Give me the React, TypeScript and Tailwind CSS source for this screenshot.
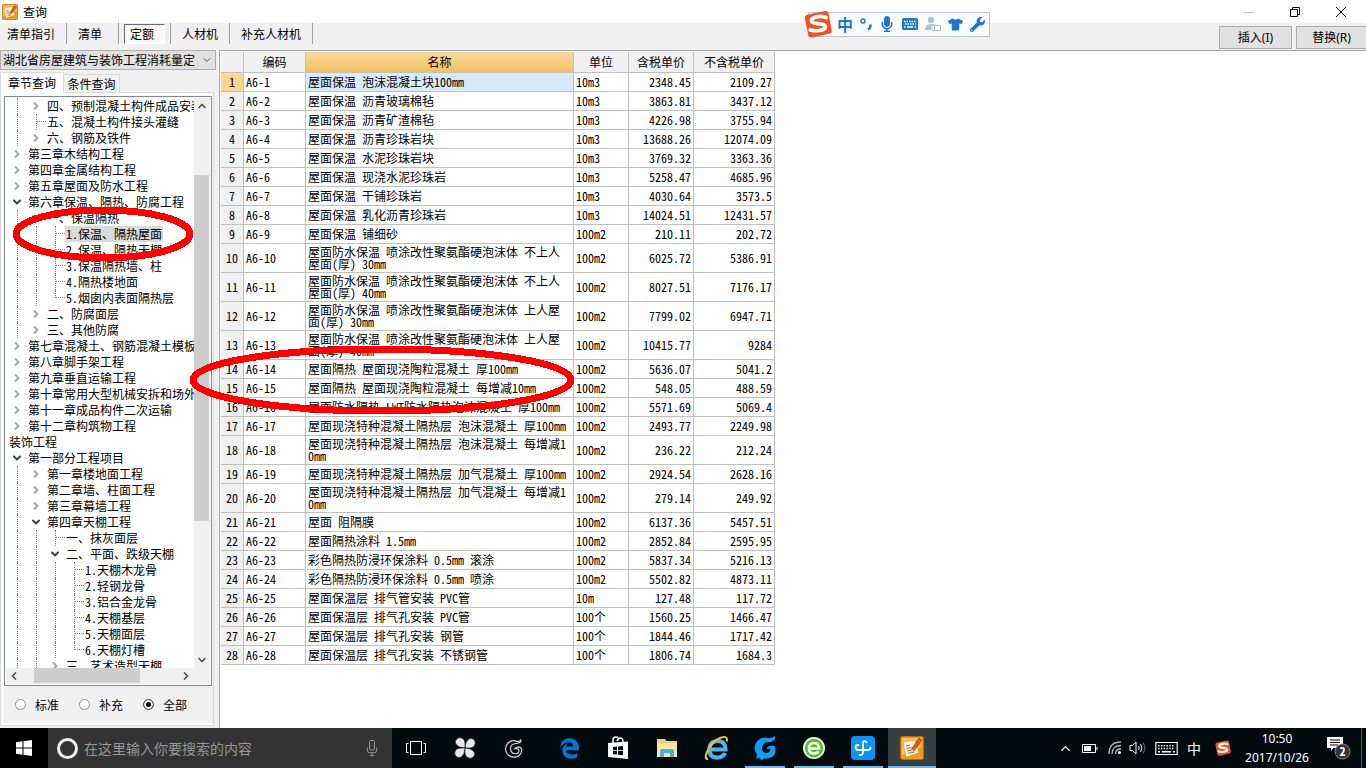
import { ReactNode } from "react";
import clsx from "clsx";
import { ChevronDown, ChevronLeft, ChevronRight, ChevronUp } from "lucide-react";
import { FaEdgeLegacy, FaMicrophone, FaTshirt, FaWrench } from "react-icons/fa";

type TreeNode = {
  // one mark per level: | line, t leaf, L last leaf, > closed, v open
  guide: string;
  text: string;
  selected?: boolean;
};

const tree: TreeNode[] = [
  { guide: "|>", text: "四、预制混凝土构件成品安装" },
  { guide: "|t", text: "五、混凝土构件接头灌缝" },
  { guide: "|>", text: "六、钢筋及铁件" },
  { guide: ">", text: "第三章木结构工程" },
  { guide: ">", text: "第四章金属结构工程" },
  { guide: ">", text: "第五章屋面及防水工程" },
  { guide: "v", text: "第六章保温、隔热、防腐工程" },
  { guide: "|v", text: "一、保温隔热" },
  { guide: "||t", text: "1.保温、隔热屋面", selected: true },
  { guide: "||t", text: "2.保温、隔热天棚" },
  { guide: "||t", text: "3.保温隔热墙、柱" },
  { guide: "||t", text: "4.隔热楼地面" },
  { guide: "||L", text: "5.烟囱内表面隔热层" },
  { guide: "|>", text: "二、防腐面层" },
  { guide: "|>", text: "三、其他防腐" },
  { guide: ">", text: "第七章混凝土、钢筋混凝土模板" },
  { guide: ">", text: "第八章脚手架工程" },
  { guide: ">", text: "第九章垂直运输工程" },
  { guide: ">", text: "第十章常用大型机械安拆和场外" },
  { guide: ">", text: "第十一章成品构件二次运输" },
  { guide: ">", text: "第十二章构筑物工程" },
  { guide: "", text: "装饰工程" },
  { guide: "v", text: "第一部分工程项目" },
  { guide: "|>", text: "第一章楼地面工程" },
  { guide: "|>", text: "第二章墙、柱面工程" },
  { guide: "|>", text: "第三章幕墙工程" },
  { guide: "|v", text: "第四章天棚工程" },
  { guide: "||t", text: "一、抹灰面层" },
  { guide: "||v", text: "二、平面、跌级天棚" },
  { guide: "|||t", text: "1.天棚木龙骨" },
  { guide: "|||t", text: "2.轻钢龙骨" },
  { guide: "|||t", text: "3.铝合金龙骨" },
  { guide: "|||t", text: "4.天棚基层" },
  { guide: "|||t", text: "5.天棚面层" },
  { guide: "|||L", text: "6.天棚灯槽" },
  { guide: "||>", text: "三、艺术造型天棚" },
];

const rows: [string, string, string, string][] = [
  ["屋面保温 泡沫混凝土块100mm", "10m3", "2348.45", "2109.27"],
  ["屋面保温 沥青玻璃棉毡", "10m3", "3863.81", "3437.12"],
  ["屋面保温 沥青矿渣棉毡", "10m3", "4226.98", "3755.94"],
  ["屋面保温 沥青珍珠岩块", "10m3", "13688.26", "12074.09"],
  ["屋面保温 水泥珍珠岩块", "10m3", "3769.32", "3363.36"],
  ["屋面保温 现浇水泥珍珠岩", "10m3", "5258.47", "4685.96"],
  ["屋面保温 干铺珍珠岩", "10m3", "4030.64", "3573.5"],
  ["屋面保温 乳化沥青珍珠岩", "10m3", "14024.51", "12431.57"],
  ["屋面保温 铺细砂", "100m2", "210.11", "202.72"],
  ["屋面防水保温 喷涂改性聚氨酯硬泡沫体 不上人\n屋面(厚) 30mm", "100m2", "6025.72", "5386.91"],
  ["屋面防水保温 喷涂改性聚氨酯硬泡沫体 不上人\n屋面(厚) 40mm", "100m2", "8027.51", "7176.17"],
  ["屋面防水保温 喷涂改性聚氨酯硬泡沫体 上人屋\n面(厚) 30mm", "100m2", "7799.02", "6947.71"],
  ["屋面防水保温 喷涂改性聚氨酯硬泡沫体 上人屋\n面(厚) 40mm", "100m2", "10415.77", "9284"],
  ["屋面隔热 屋面现浇陶粒混凝土 厚100mm", "100m2", "5636.07", "5041.2"],
  ["屋面隔热 屋面现浇陶粒混凝土 每增减10mm", "100m2", "548.05", "488.59"],
  ["屋面防水隔热 LWT防水隔热泡沫混凝土 厚100mm", "100m2", "5571.69", "5069.4"],
  ["屋面现浇特种混凝土隔热层 泡沫混凝土 厚100mm", "100m2", "2493.77", "2249.98"],
  ["屋面现浇特种混凝土隔热层 泡沫混凝土 每增减1\n0mm", "100m2", "236.22", "212.24"],
  ["屋面现浇特种混凝土隔热层 加气混凝土 厚100mm", "100m2", "2924.54", "2628.16"],
  ["屋面现浇特种混凝土隔热层 加气混凝土 每增减1\n0mm", "100m2", "279.14", "249.92"],
  ["屋面 阻隔膜", "100m2", "6137.36", "5457.51"],
  ["屋面隔热涂料 1.5mm", "100m2", "2852.84", "2595.95"],
  ["彩色隔热防浸环保涂料 0.5mm 滚涂", "100m2", "5837.34", "5216.13"],
  ["彩色隔热防浸环保涂料 0.5mm 喷涂", "100m2", "5502.82", "4873.11"],
  ["屋面保温层 排气管安装 PVC管", "10m", "127.48", "117.72"],
  ["屋面保温层 排气孔安装 PVC管", "100个", "1560.25", "1466.47"],
  ["屋面保温层 排气孔安装 钢管", "100个", "1844.46", "1717.42"],
  ["屋面保温层 排气孔安装 不锈钢管", "100个", "1806.74", "1684.3"],
];

const NotebookIcon = ({ className }: { className?: string }) => (
  <svg viewBox="0 0 24 24" className={className}>
    <rect x="0.5" y="0.5" width="23" height="23" rx="2" fill="#f39a12" stroke="#b86a08" />
    <path d="M2 2h20v9L2 19z" fill="#ffc04d" />
    <path d="M3 6l12-2 4 13-13 4z" fill="#fff8e8" stroke="#c88a3a" strokeWidth=".6" />
    <path d="M6 10l4-1M6.500 12.500l5-1M7 15l5-1M8 17.500l6-1.500" stroke="#8a6a4a" strokeWidth="1" />
    <path d="M19 2l3 2-8 11-3 2 .5-4z" fill="#e35b1a" stroke="#8f3405" strokeWidth=".6" />
    <path d="M11 17l.5-4 2.500 2z" fill="#fbe2b0" />
  </svg>
);

const SogouIcon = ({ className }: { className?: string }) => (
  <svg viewBox="0 0 28 28" className={className}>
    <path
      d="M4 4.500L21 1q3-.5 3.600 2.300l3 17q.4 2.700-2.300 3.500L8 27.500q-3 .5-3.600-2.300L.8 8.500Q.4 5.300 4 4.500z"
      fill="#f4511e"
    />
    <path
      d="M22 7.500C17 5.500 7 6.500 7.500 11c.4 4 13.500 1.500 13.800 5.500.2 4-10 5.500-15 3.500"
      fill="none"
      stroke="#fff"
      strokeWidth="3.800"
      strokeLinecap="round"
    />
  </svg>
);

const KeyboardIcon = ({ className }: { className?: string }) => (
  <svg viewBox="0 0 24 14" className={className} fill="none" stroke="currentColor">
    <rect x="0.5" y="0.5" width="23" height="13" strokeWidth="1.200" />
    <path d="M3 4h18M3 7h18" strokeWidth="1.500" strokeDasharray="1.500 1.500" />
    <path d="M3 10.500h2M7 10.500h10M19 10.500h2" strokeWidth="1.500" />
  </svg>
);

const GuideCell = ({ mark }: { mark: string }) => {
  if (mark === ">" || mark === "v") {
    return (
      <span className="flex h-4 w-[19px] shrink-0 items-center pl-[3px]">
        {mark === ">" ? (
          <ChevronRight className="size-3 text-[#a6a6a6]" strokeWidth={4} />
        ) : (
          <ChevronDown className="size-3 text-[#404040]" strokeWidth={4} />
        )}
      </span>
    );
  }
  return (
    <span className="flex h-4 w-[19px] shrink-0 pl-[9px]">
      <span
        className={clsx(
          "border-l border-dotted border-[#808080]",
          mark === "L" ? "h-2" : "h-4"
        )}
      />
      {mark !== "|" && (
        <span className="h-2 flex-1 border-b border-dotted border-[#808080]" />
      )}
    </span>
  );
};

const ScrollButton = ({ label, children }: { label: string; children: ReactNode }) => (
  <button
    type="button"
    aria-label={label}
    className="flex size-4 shrink-0 items-center justify-center text-[#505050]"
  >
    {children}
  </button>
);

const TitleBar = () => (
  <header className="flex h-[23px] shrink-0 items-center bg-white">
    <NotebookIcon className="ml-0.5 size-4" />
    <h1 className="ml-[5px] flex-1 text-[12px]">查询</h1>
    <div className="flex pr-0.5">
      <button type="button" aria-label="最小化" className="flex h-5 w-[46px] items-center justify-center">
        <svg viewBox="0 0 10 10" className="size-[10px]" stroke="#c4c4c4">
          <path d="M0 5.500h10" />
        </svg>
      </button>
      <button type="button" aria-label="还原" className="flex h-5 w-[46px] items-center justify-center">
        <svg viewBox="0 0 10 10" className="size-[10px]" fill="none" stroke="#000">
          <path d="M.5 2.500h7v7h-7zM2.500 2.500v-2h7v7h-2" />
        </svg>
      </button>
      <button type="button" aria-label="关闭" className="flex h-5 w-[46px] items-center justify-center">
        <svg viewBox="0 0 10 10" className="size-[10px]" stroke="#000">
          <path d="M0 0l10 10M10 0L0 10" />
        </svg>
      </button>
    </div>
  </header>
);

const ToolButton = ({ text, active }: { text: string; active?: boolean }) => (
  <div className="flex h-[21px] items-center border-r border-[#a0a0a0] px-[5px]">
    <button
      type="button"
      className={clsx(
        "h-5 min-w-[41px] border px-[5px] text-left leading-[18px]",
        active
          ? "border-t-[#696969] border-r-white border-b-white border-l-[#696969] bg-[#f8f8f8]"
          : "border-transparent"
      )}
    >
      {text}
    </button>
  </div>
);

const Toolbar = () => (
  <div className="flex h-[27px] shrink-0 justify-between">
    <div className="-ml-1 flex items-start">
      <ToolButton text="清单指引" />
      <ToolButton text="清单" />
      <ToolButton text="定额" active />
      <ToolButton text="人材机" />
      <ToolButton text="补充人材机" />
    </div>
    <div className='flex items-center gap-1 pt-0.5 font-["Noto_Sans","Noto_Sans_CJK_SC",sans-serif]'>
      <button type="button" className="h-[23px] w-[73px] border border-[#adadad] bg-[#e1e1e1]">
        插入(I)
      </button>
      <button type="button" className="h-[23px] w-[70px] border border-r-0 border-[#adadad] bg-[#e1e1e1]">
        替换(R)
      </button>
    </div>
  </div>
);

const Sidebar = () => (
  <aside className="flex w-[219px] shrink-0 flex-col">
    <div className="relative mr-[3px] h-5 shrink-0 text-[12px]">
      <select
        aria-label="定额库"
        className="h-full w-full appearance-none border border-[#adadad] bg-[#e1e1e1] pl-[2px]"
      >
        <option>湖北省房屋建筑与装饰工程消耗量定</option>
      </select>
      <ChevronDown className="pointer-events-none absolute top-1 right-[3px] size-3 text-[#505050]" />
    </div>
    <div role="tablist" className="z-10 -mb-px flex h-[23px] shrink-0 items-end pt-[2px]">
      <button
        type="button"
        role="tab"
        aria-selected="true"
        className="h-[21px] w-16 border border-b-0 border-[#d9d9d9] bg-white"
      >
        章节查询
      </button>
      <button
        type="button"
        role="tab"
        aria-selected="false"
        className="h-[19px] w-14 border-t border-r border-b border-[#d9d9d9]"
      >
        条件查询
      </button>
    </div>
    <div className="mr-[5px] mb-[2px] flex min-h-0 flex-1 flex-col border border-[#d9d9d9] bg-white p-[3px] pr-0 pb-0.5">
      <div className="mr-px flex min-h-0 flex-1 flex-col border border-[#828790] p-px">
        <div className="flex min-h-0 flex-1">
          <ul role="tree" className="min-w-0 flex-1 overflow-hidden pl-[2px]">
            {tree.map((node) => (
              <li
                key={node.guide + node.text}
                role="treeitem"
                aria-selected={!!node.selected}
                className="flex h-4 whitespace-nowrap"
              >
                {node.guide.split("").map((mark, i) => (
                  <GuideCell key={i} mark={mark} />
                ))}
                <span
                  className={clsx(
                    "h-4 px-px leading-4",
                    node.selected && "bg-[#d9d9d9]"
                  )}
                >
                  {node.text}
                </span>
              </li>
            ))}
          </ul>
          <div className="flex w-4 shrink-0 flex-col bg-[#f0f0f0]">
            <ScrollButton label="向上滚动">
              <ChevronUp className="size-3" strokeWidth={3.5} />
            </ScrollButton>
            <div className="flex min-h-0 flex-1 flex-col">
              <div className="grow-[61]" />
              <div className="mr-px grow-[347] bg-[#cdcdcd]" />
              <div className="grow-[131]" />
            </div>
            <ScrollButton label="向下滚动">
              <ChevronDown className="size-3" strokeWidth={3.5} />
            </ScrollButton>
          </div>
        </div>
        <div className="flex h-4 shrink-0 bg-[#f0f0f0] pr-4">
          <ScrollButton label="向左滚动">
            <ChevronLeft className="size-3" strokeWidth={3.5} />
          </ScrollButton>
          <div className="flex flex-1">
            <div className="grow-[12]" />
            <div className="mb-px grow-[105] bg-[#cdcdcd]" />
            <div className="grow-[38]" />
          </div>
          <ScrollButton label="向右滚动">
            <ChevronRight className="size-3" strokeWidth={3.5} />
          </ScrollButton>
        </div>
      </div>
      <fieldset className="shrink-0 bg-[#f0f0f0]">
        <div className="flex h-[37px] items-center gap-[5px] pl-[11px]">
          {["标准", "补充", "全部"].map((text) => (
            <label key={text} className="flex w-[59px] items-center gap-[9px]">
              <input
                type="radio"
                name="source"
                defaultChecked={text === "全部"}
                className="size-[11px] appearance-none rounded-full border border-[#8c8c8c] bg-white checked:border-[#555] checked:bg-black checked:ring-2 checked:ring-white checked:ring-inset"
              />
              {text}
            </label>
          ))}
        </div>
      </fieldset>
    </div>
  </aside>
);

const Grid = () => (
  <main className="min-w-0 flex-1 overflow-hidden border-t border-l border-[#a5a5ad] bg-white pt-px pl-px">
    <table className="w-[554px] table-fixed border-separate border-spacing-0">
      <colgroup>
        <col className="w-[23px]" />
        <col className="w-[62px]" />
        <col className="w-[268px]" />
        <col className="w-[55px]" />
        <col className="w-[65px]" />
        <col className="w-[81px]" />
      </colgroup>
      <thead>
        <tr className="h-[21px] bg-[#f0f0f0] *:border-r *:border-b *:border-[#c0c0c0] *:p-0 *:leading-4 *:font-normal">
          <th />
          <th>编码</th>
          <th className="bg-linear-to-b from-[#f9d99f] to-[#f1c15f]">名称</th>
          <th>单位</th>
          <th>含税单价</th>
          <th>不含税单价</th>
        </tr>
      </thead>
      <tbody>
        {rows.map(([name, unit, taxed, untaxed], i) => (
          <tr
            key={i}
            className="h-[19px] *:border-r *:border-b *:border-[#c0c0c0] *:px-[2px] *:py-[2px] *:leading-[12px]"
          >
            <th
              scope="row"
              className={clsx("font-normal", i === 0 ? "bg-[#ffd58d]" : "bg-[#f0f0f0]")}
            >
              {i + 1}
            </th>
            <td>A6-{i + 1}</td>
            <td className={clsx("whitespace-pre", i === 0 && "bg-[#d8e9f8]")}>{name}</td>
            <td>{unit}</td>
            <td className="text-right">{taxed}</td>
            <td className="text-right">{untaxed}</td>
          </tr>
        ))}
      </tbody>
    </table>
  </main>
);

const ImeBar = () => (
  <div className="absolute top-[10px] left-[804px] flex items-center">
    <SogouIcon className="z-10 size-7" />
    <div className="-ml-6 flex h-[25px] w-[182px] items-center justify-between border border-[#b4c6d8] bg-[#fafdff] pr-1 pl-[28px] text-[#2277c8]">
      <span className="text-[16px] leading-4 font-bold">中</span>
      <svg viewBox="0 0 12 14" className="h-[14px] w-3" fill="none" stroke="currentColor">
        <circle cx="3" cy="4" r="2" strokeWidth="1.500" />
        <path d="M10 7.500q1.500 3-2 5" strokeWidth="2.500" />
      </svg>
      <FaMicrophone className="size-4" />
      <svg viewBox="0 0 16 12" className="h-3 w-4">
        <rect width="16" height="12" rx="1.500" fill="currentColor" />
        <path d="M2 3.500h12M3 6h11" stroke="#fff" strokeWidth="1.500" strokeDasharray="1.500 1" />
        <path d="M2 9h1.500M5 9h6M12.500 9H14" stroke="#fff" strokeWidth="1.500" />
      </svg>
      <svg viewBox="0 0 16 16" className="size-4" fill="#b3c0d4">
        <circle cx="6" cy="4" r="3.200" />
        <path d="M0 14q0-6 6-6t5 2H6v4z" />
        <path d="M7 9.500h8.500v5H7zM9.500 9.500v5M12.500 11v.5m0 1.500v.5" fill="#fff" stroke="#b3c0d4" />
      </svg>
      <FaTshirt className="size-[15px]" />
      <FaWrench className="size-[15px]" />
    </div>
  </div>
);

const Marks = () => (
  <svg
    width="600"
    height="430"
    className="pointer-events-none absolute top-0 left-0"
    fill="none"
    stroke="#f00"
    strokeWidth="7"
    shapeRendering="crispEdges"
  >
    <ellipse cx="103" cy="234" rx="87" ry="24" />
    <ellipse cx="382" cy="380" rx="189" ry="31" />
  </svg>
);

const TaskButton = ({
  label,
  running,
  active,
  children,
}: {
  label: string;
  running?: boolean;
  active?: boolean;
  children: ReactNode;
}) => (
  <button
    type="button"
    aria-label={label}
    className={clsx(
      "relative flex h-10 w-12 items-center justify-center",
      active && "bg-[#374043]"
    )}
  >
    {children}
    {(running || active) && (
      <span
        className={clsx(
          "absolute bottom-0 h-0.5 bg-[#76b9ed]",
          active ? "inset-x-0" : "inset-x-1"
        )}
      />
    )}
  </button>
);

const Taskbar = () => (
  <footer className="flex h-10 shrink-0 bg-[#020b0e] text-white">
    <button type="button" aria-label="开始" className="flex w-12 items-center justify-center bg-black">
      <svg viewBox="0 0 16 16" className="size-4" fill="#fff">
        <path d="M0 2.200l6.500-.9v6.200H0zM7.500 1.200L16 0v7.500H7.500zM0 8.500h6.500v6.200L0 13.800zM7.500 8.500H16V16l-8.500-1.200z" />
      </svg>
    </button>
    <label className="flex w-[344px] items-center bg-[#333] pr-[14px] pl-[9px]">
      <span className="size-[21px] shrink-0 rounded-full border-3 border-[#f0f0f0]" />
      <input
        type="text"
        aria-label="搜索"
        placeholder="在这里输入你要搜索的内容"
        className="ml-[6px] min-w-0 flex-1 text-[14px] outline-none placeholder:text-[#979797]"
      />
      <svg viewBox="0 0 12 18" className="h-[17px] w-3" fill="none" stroke="#a0a0a0">
        <path d="M3.500 1.500q0-1 1-1h3q1 0 1 1v8q0 1-1 1h-3q-1 0-1-1zM1 8v3q0 2.500 2.500 2.500h5Q11 13.500 11 11V8M6 13.500v3M3.500 16.500h5" />
      </svg>
    </label>
    <div className="flex gap-px">
      <TaskButton label="任务视图">
        <svg viewBox="0 0 20 16" className="h-4 w-5" fill="none" stroke="#fff">
          <path d="M4.500 1.500h11v13h-11zM2.500 3.500h-2v9h2M17.500 3.500h2v9h-2" />
        </svg>
      </TaskButton>
      <TaskButton label="风车">
        <svg viewBox="0 0 24 24" className="size-6" fill="#e8e8e8" stroke="#020b0e" strokeWidth=".7">
          <path d="M12 12Q12.500 5 10.500 3 7 .5 4 2.500 1 5.500 3 8.500q3 3.500 9 3.500z" />
          <path d="M12 12q7 .5 9-1.500 2.500-3.500.5-6.500-3-3-6-1Q12 6 12 12z" />
          <path d="M12 12q-.5 7 1.500 9 3.500 2.500 6.500.5 3-3 1-6Q18 12 12 12z" />
          <path d="M12 12q-7-.5-9 1.500-2.500 3.500-.5 6.500 3 3 6 1Q12 18 12 12z" />
        </svg>
      </TaskButton>
      <TaskButton label="G">
        <svg viewBox="0 0 22 22" className="size-[21px]" fill="none" stroke="#ddd" strokeWidth="1.200">
          <path d="M17 1.500q1 2-3 2Q8 1.500 4.500 5-.5 10 3 16q4 5.500 11 3.500 5-2.500 4.500-8.500-3.500-3.500-7 0l3.500.5q2 4-2 5-5 .5-6-4Q6 7 11 6q5-.5 6.500-2 .7-1.500-.5-2.500z" />
        </svg>
      </TaskButton>
    </div>
    <div className="ml-[7px] flex gap-px">
      <TaskButton label="Edge">
        <FaEdgeLegacy className="size-[21px] text-[#0078d7]" />
      </TaskButton>
      <TaskButton label="应用商店">
        <svg viewBox="0 0 22 24" className="h-6 w-[22px]">
          <path d="M6 7V4q0-3 3-3 2.500 0 2.500 3M10 5q1-3 3.500-3Q16 2 16 6" fill="none" stroke="#fff" strokeWidth="1.500" />
          <path d="M1 7l20-1.500V23L1 21z" fill="#fff" />
          <path d="M6 11l4-.4v3.600H6zM11 10.500l5-.5v4.200h-5zM6 15h4v3.600l-4-.4zM11 15h5v4.200l-5-.5z" fill="#020b0e" />
        </svg>
      </TaskButton>
      <TaskButton label="文件资源管理器">
        <svg viewBox="0 0 22 20" className="h-5 w-[22px]">
          <path d="M1 1h8l1.500 2H21v16H1z" fill="#f6cf70" />
          <path d="M1 5h20v14H1z" fill="#ffe69a" />
          <path d="M4 19v-6q0-2 2-2h10q2 0 2 2v6h-4v-4H8v4z" fill="#3cb4e8" />
        </svg>
      </TaskButton>
      <TaskButton label="Internet Explorer">
        <svg viewBox="0 0 26 26" className="size-[26px]" fill="none">
          <path d="M7 14.500h15.500Q22.500 6 14.500 6T6.500 14.500t8 8q5.500 0 7.500-4.500" stroke="#4db2ee" strokeWidth="4.200" />
          <path d="M5 24q-4 0-1-7Q8 7 17 3q7-2.500 7 1.500 0 1-.5 2" stroke="#f8c51c" strokeWidth="2" />
        </svg>
      </TaskButton>
      <TaskButton label="广联达" running>
        <svg viewBox="0 0 26 26" className="size-[26px]">
          <path
            d="M23 1q1 5-5 6-7-1-8 6 0 5 5 5 4-1 3-4l-4-.5q4-5 9-2 2 8-4 11-3 1.500-7 1l-3 2-1-2.500-4 .5 1-4Q1 14 3.500 9 7 2 14 2.500 20 4 23 1z"
            fill="#149bf3"
          />
        </svg>
      </TaskButton>
      <TaskButton label="360浏览器" running>
        <svg viewBox="0 0 24 24" className="size-[22px]">
          <circle cx="12" cy="12" r="11" fill="#58bd2c" stroke="#eaf8df" strokeWidth="2" />
          <path d="M6.500 12.500h11q0-6-5.500-6t-5.500 6q0 5.500 5.500 5.500 3.500 0 5-2.500" fill="none" stroke="#fff" strokeWidth="2.800" />
        </svg>
      </TaskButton>
      <TaskButton label="云助手" running>
        <svg viewBox="0 0 24 24" className="size-6" fill="none" stroke="#fff" strokeWidth="1.800" strokeLinecap="round">
          <rect width="24" height="24" rx="4" fill="#0a93f5" stroke="none" />
          <path d="M15.500 6Q12 3.500 12 7.500V16q0 3.500-3.500 3M7.500 9q-3 0-3 2.500T7.500 14h9q3 0 3-2.500" />
        </svg>
      </TaskButton>
      <TaskButton label="查询" active>
        <NotebookIcon className="size-6" />
      </TaskButton>
    </div>
    <div className="ml-auto flex items-center">
      <ChevronUp className="size-[15px]" strokeWidth={2} />
      <svg viewBox="0 0 16 10" className="ml-[9px] h-[10px] w-4" fill="none" stroke="#fff">
        <path d="M.5 1.500h13v8H.5zM15 4v3" />
        <path d="M2 3h7v5H2z" fill="#fff" stroke="none" />
      </svg>
      <svg viewBox="0 0 14 14" className="ml-[10px] size-[14px]" fill="none" stroke="#bbb" strokeWidth="1.300">
        <path d="M1 13Q1 1 13 1M4 13q0-8.500 9-8.500M7.500 13q0-5 5.500-5" />
        <circle cx="11.500" cy="11.500" r="1.500" fill="#fff" stroke="none" />
      </svg>
      <svg viewBox="0 0 18 14" className="ml-[7px] h-[14px] w-[18px]" fill="none" stroke="#fff">
        <path d="M1 4.500h2.500L7 1v12L3.500 9.500H1zM9.500 5q1.500 2 0 4M11.500 3q3 4 0 8" />
        <path d="M14 1.500q4 5.500 0 11" stroke="#777" />
      </svg>
      <KeyboardIcon className="ml-2 h-[13px] w-[23px]" />
      <span className="ml-[9px] text-[14px]">中</span>
      <SogouIcon className="ml-[14px] size-4" />
      <div className='ml-3 w-[68px] text-center font-["Noto_Sans",sans-serif] text-[12px] leading-[19px]'>
        <p>10:50</p>
        <p>2017/10/26</p>
      </div>
      <button type="button" aria-label="通知" className="ml-4 flex h-10 w-[34px] items-center">
        <svg viewBox="0 0 26 24" className="h-6 w-[26px]">
          <path d="M0 1h16v11H6.500L4 15v-3H0z" fill="#fff" />
          <path d="M3 4h10M3 6.500h10M3 9h8" stroke="#000" />
          <circle cx="15.500" cy="15.500" r="7.500" fill="#333" stroke="#888" />
          <text x="15.500" y="20" textAnchor="middle" fontSize="12" fontWeight="700" fill="#fff">
            2
          </text>
        </svg>
      </button>
      <span className="mr-1 h-10 border-l border-[#555]" />
    </div>
  </footer>
);

export default function App() {
  return (
    <div className='relative flex h-screen flex-col overflow-hidden bg-[#f0f0f0] font-["Noto_Sans_Mono_CJK_SC","Noto_Sans_CJK_SC",sans-serif] text-[12px] text-black'>
      <TitleBar />
      <Toolbar />
      <div className="flex min-h-0 flex-1">
        <Sidebar />
        <Grid />
      </div>
      <Taskbar />
      <ImeBar />
      <Marks />
    </div>
  );
}
